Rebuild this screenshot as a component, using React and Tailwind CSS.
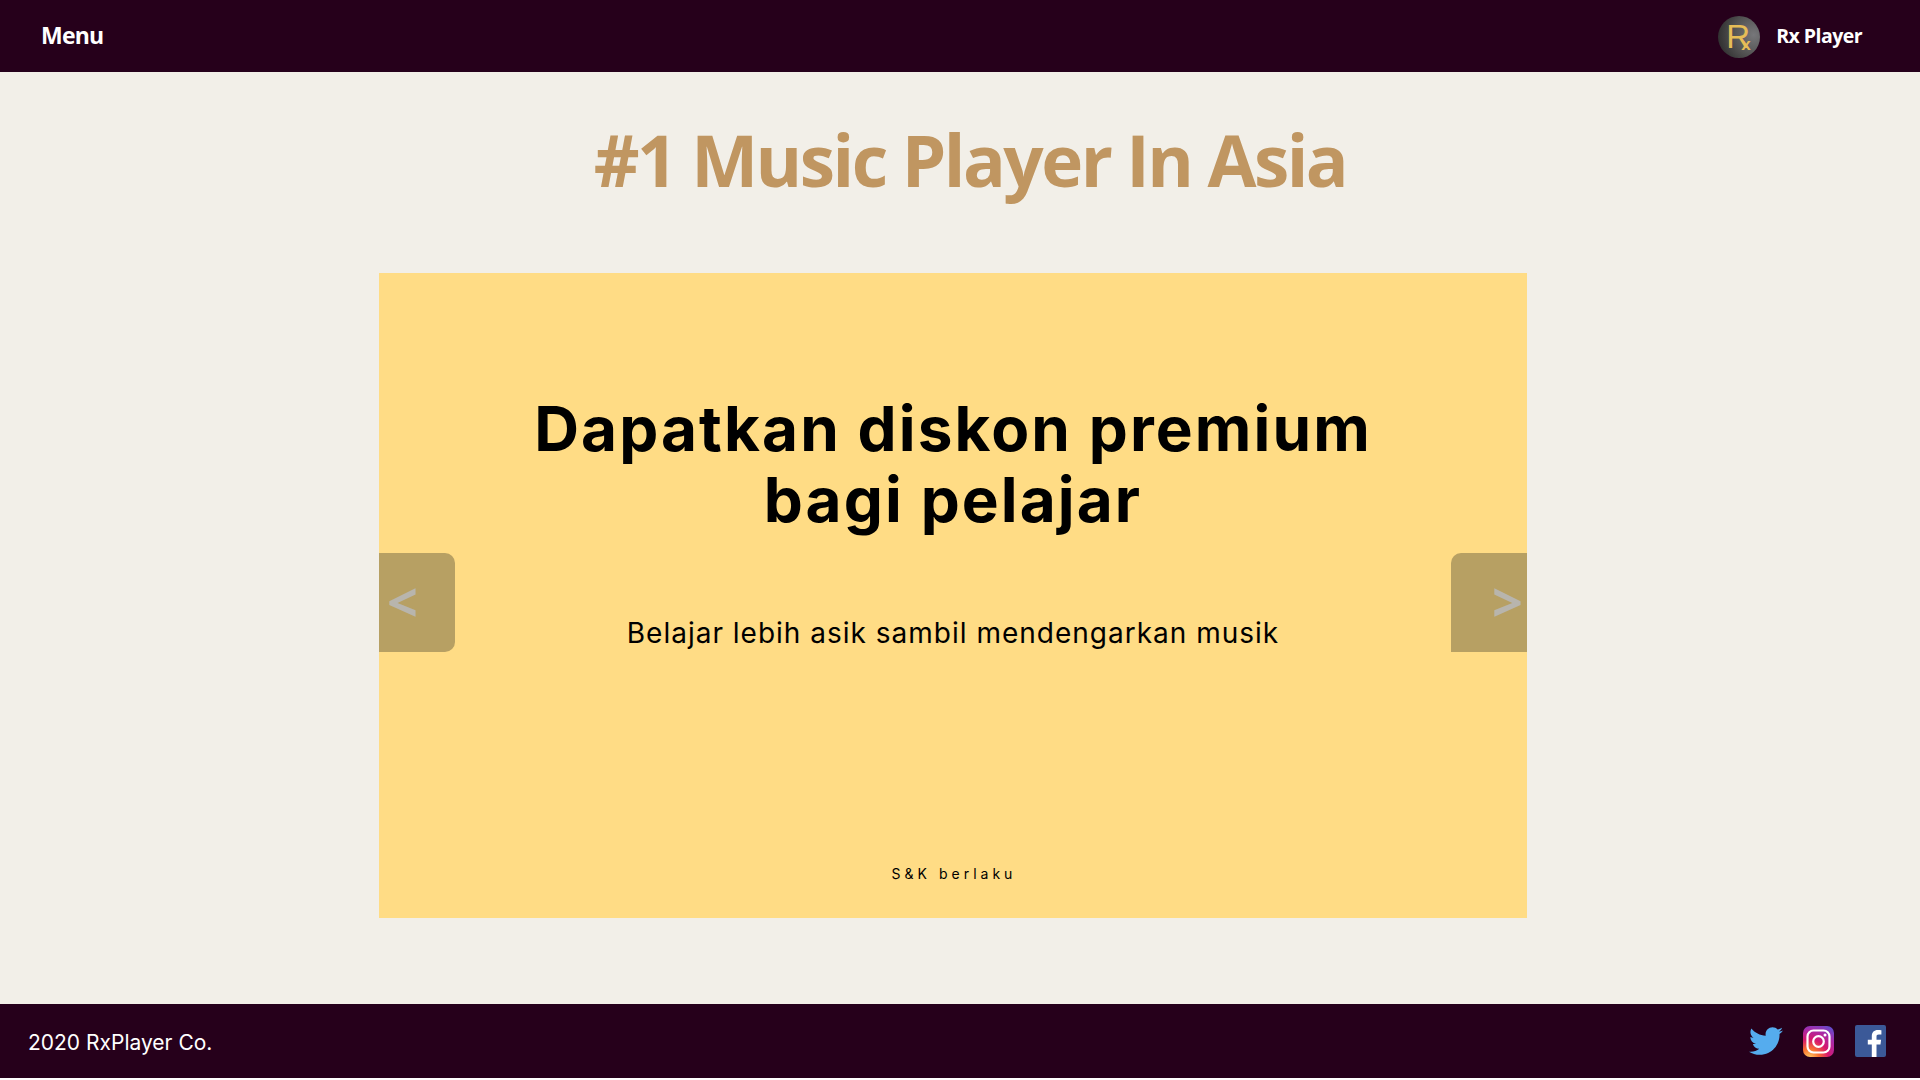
import React from "react";
import { FaTwitter } from "react-icons/fa";

const myriad = "font-['Open_Sans',sans-serif]";
const mont = "font-['Inter',sans-serif]";

function Logo() {
  return (
    <div className="relative mt-[2px] w-[42px] h-[42px] rounded-full bg-[radial-gradient(circle_at_85%_45%,#77777a_0%,#555_45%,#222_100%)] overflow-hidden">
      <span className="absolute left-[8px] top-[2px] text-[33px] leading-[38px] text-[#e6bd57] font-['Liberation_Sans',sans-serif]">R</span>
      <span className="absolute left-[23px] top-[20px] text-[17px] leading-[18px] font-bold text-[#e6bd57] font-['Liberation_Sans',sans-serif]">x</span>
    </div>
  );
}

function Instagram() {
  return (
    <svg width="31" height="31" viewBox="0 0 31 31" className="mr-[1px]">
      <defs>
        <radialGradient id="ig" cx="0.2" cy="1.05" r="1.25">
          <stop offset="0" stopColor="#fed36a" />
          <stop offset="0.25" stopColor="#f9722f" />
          <stop offset="0.5" stopColor="#d6186e" />
          <stop offset="0.75" stopColor="#a82aa8" />
          <stop offset="1" stopColor="#5b4fd0" />
        </radialGradient>
      </defs>
      <rect width="31" height="31" rx="7" fill="url(#ig)" />
      <rect x="4.5" y="4.5" width="22" height="22" rx="6" fill="none" stroke="#fff" strokeWidth="2.2" />
      <circle cx="15.5" cy="15.5" r="5.3" fill="none" stroke="#fff" strokeWidth="2.2" />
      <circle cx="22" cy="9" r="1.5" fill="#fff" />
    </svg>
  );
}

function Facebook() {
  return (
    <svg width="31" height="32" viewBox="0 0 31 32">
      <rect width="31" height="32" rx="2" fill="#3b5998" />
      <path d="M21.5 32V19.6h4l.6-4.8h-4.6v-3c0-1.4.4-2.3 2.4-2.3h2.5V5.2c-.4-.1-1.9-.2-3.6-.2-3.6 0-6 2.2-6 6.200v3.600h-4v4.800h4V32z" fill="#fff" />
    </svg>
  );
}

export default function App() {
  return (
    <div className="flex flex-col h-[1078px] bg-[#f2efe8]">
      <header className="flex h-[72px] shrink-0 items-center justify-between bg-[#26001b] pl-[41px] pr-[58px]">
        <span className={`${myriad} -mt-[2px] text-[23px] font-bold text-white tracking-[-0.8px]`}>Menu</span>
        <div className="flex items-center gap-[16px]">
          <Logo />
          <span className={`${myriad} text-[19.5px] font-bold text-white tracking-[-0.55px]`}>Rx Player</span>
        </div>
      </header>

      <main className="flex flex-1 flex-col">
        <h1 className={`${myriad} pl-[20px] pt-[44px] text-center text-[71px] leading-[88px] font-bold text-[#c09661] tracking-[-2.5px]`}>
          #1 Music Player In Asia
        </h1>
        <section className="relative ml-[379px] mt-[69px] flex h-[645px] w-[1148px] flex-col items-center bg-[#ffdc85] text-black">
          <h2 className={`${mont} mt-[120px] text-center text-[62px] leading-[71px] font-bold tracking-[2.1px]`}>
            Dapatkan diskon premium
            <br />
            bagi pelajar
          </h2>
          <p className={`${mont} mt-[80px] text-[28px] leading-[36px] tracking-[1px]`}>Belajar lebih asik sambil mendengarkan musik</p>
          <p className={`${mont} ml-[2px] mt-[214px] text-[14px] leading-[18px] tracking-[4px]`}>S&amp;K berlaku</p>

          <div className="absolute left-0 top-[280px] flex h-[99px] w-[76px] items-center rounded-r-[10px] bg-[#b7a063] pl-[8px]">
            <span className={`${myriad} -mt-[3px] text-[54px] font-bold leading-none text-[#b8b5ad]`}>&lt;</span>
          </div>
          <div className="absolute right-0 top-[280px] flex h-[99px] w-[76px] items-center justify-end rounded-tl-[10px] bg-[#b7a063] pr-[4px]">
            <span className={`${myriad} -mt-[3px] text-[54px] font-bold leading-none text-[#b8b5ad]`}>&gt;</span>
          </div>
        </section>
      </main>

      <footer className="flex h-[74px] shrink-0 items-center justify-between bg-[#26001b] pl-[28px] pr-[34px]">
        <span className={`${mont} mt-[4px] text-[21px] text-white`}>2020 RxPlayer Co.</span>
        <div className="flex items-center gap-[20px]">
          <FaTwitter className="text-[34px] text-[#55acee]" />
          <Instagram />
          <Facebook />
        </div>
      </footer>
    </div>
  );
}
